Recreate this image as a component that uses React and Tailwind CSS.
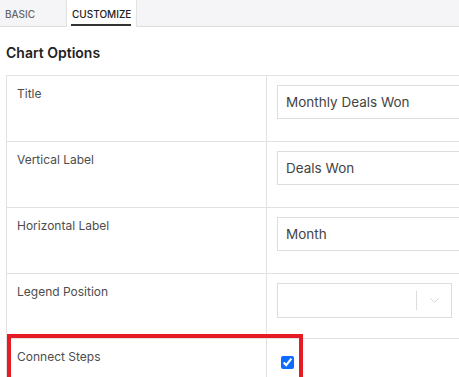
import React from "react";
import { ChevronDown } from "lucide-react";

const rows = [
  { label: "Title", value: "Monthly Deals Won", h: "h-[66px]" },
  { label: "Vertical Label", value: "Deals Won", h: "h-[66px]" },
  { label: "Horizontal Label", value: "Month", h: "h-[66px]" },
  { label: "Legend Position", select: true, h: "h-[65px]" },
  { label: "Connect Steps", checkbox: true, h: "h-[65px]" },
];

const App = () => {
  return (
    <div className="relative w-[459px] h-[377px] overflow-hidden bg-white font-['Inter',sans-serif]">
      {/* Tabs */}
      <div className="flex h-[27px] bg-[#f5f5f7] border-b border-[#dddddd]">
        <div className="w-[66px] pl-[5px] pt-[7px] text-[10px] font-medium text-[#666]">
          BASIC
        </div>
        <div className="relative h-[27px] w-[71px] bg-white border-x border-[#e2e2e2] pl-[5px] pt-[7px] text-[10px] font-medium text-[#222]">
          CUSTOMIZE
          <div className="absolute left-[4px] right-[5px] bottom-[1px] h-[2px] bg-[#333]"></div>
        </div>
      </div>

      {/* Content */}
      <div className="pl-[6px]">
        <h2 className="mt-[16px] text-[14px] leading-[20px] font-semibold text-[#222]">
          Chart Options
        </h2>
        <div className="mt-[12px] w-[520px] border-t border-l border-[#e2e2e2]">
          {rows.map((row) => (
            <div
              key={row.label}
              className={`flex ${row.h} border-b border-[#e2e2e2]`}
            >
              <div className="w-[260px] shrink-0 border-r border-[#e2e2e2] pl-[10px] pt-[10px] text-[12px] leading-[16px] text-[#4d4d4d]">
                {row.label}
              </div>
              <div className="flex-1 pl-[10px] pt-[9px]">
                {row.value && (
                  <div className="h-[34px] w-[240px] border border-[#dddddd] pl-[8px] flex items-center text-[13.5px] text-[#444]">
                    {row.value}
                  </div>
                )}
                {row.select && (
                  <div className="h-[35px] w-[175px] border border-[#dddddd] flex items-center justify-end">
                    <div className="h-[19px] w-px bg-[#dddddd]"></div>
                    <div className="w-[34px] flex justify-center">
                      <ChevronDown size={15} strokeWidth={1.3} color="#cccccc" />
                    </div>
                  </div>
                )}
                {row.checkbox && (
                  <div className="pl-[4px] pt-[3px]">
                    <input
                      type="checkbox"
                      checked
                      readOnly
                      className="w-[13px] h-[13px] m-0 accent-[#0b6cff]"
                    />
                  </div>
                )}
              </div>
            </div>
          ))}
        </div>
      </div>

      {/* Highlight annotation */}
      <div className="absolute left-[7px] top-[334px] w-[296px] h-[48px] border-4 border-[#e51c23]"></div>
    </div>
  );
};

export default App;
